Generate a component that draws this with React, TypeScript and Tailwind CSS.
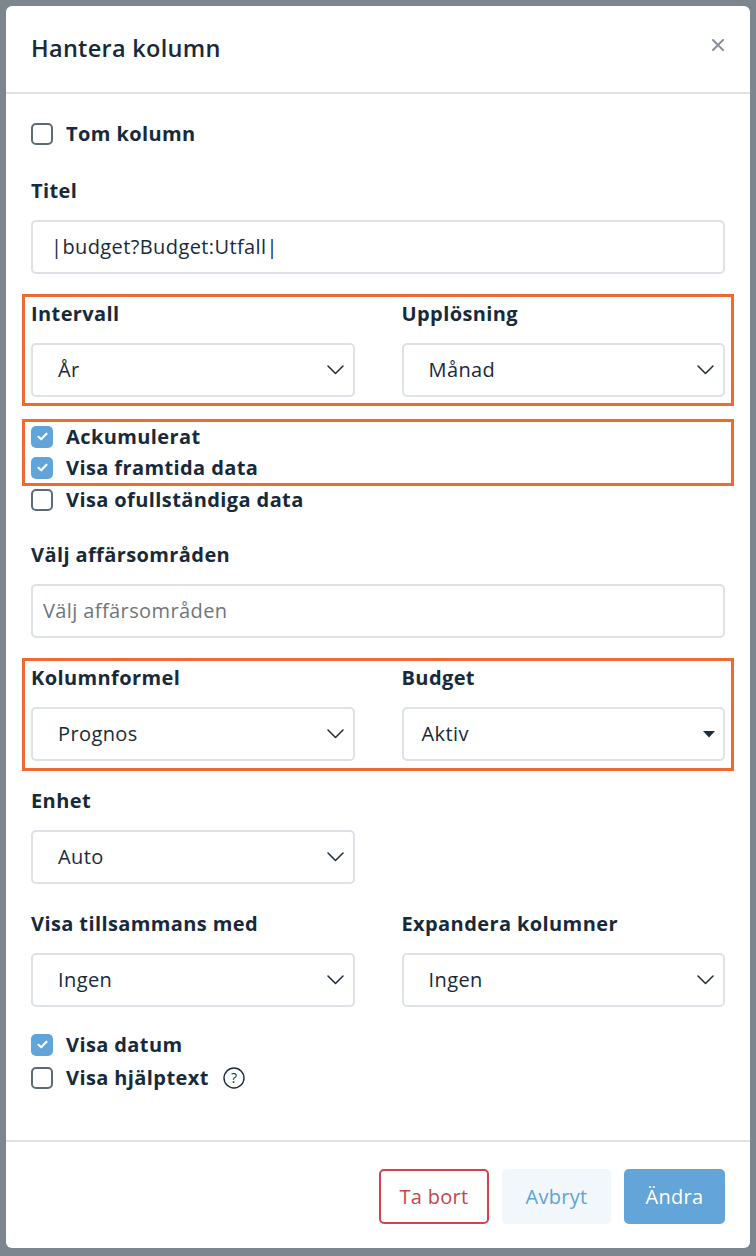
import React from 'react';

const font = { fontFamily: "'Open Sans', Lato, sans-serif" };

const Check: React.FC<{ checked?: boolean; label: string; children?: React.ReactNode }> = ({ checked, label, children }) => (
  <div className="flex items-center h-[31px]">
    {checked ? (
      <span className="w-[22px] h-[22px] rounded-[5px] bg-[#61a4da] flex items-center justify-center">
        <svg width="11" height="9" viewBox="0 0 11 9" fill="none">
          <path d="M1.5 4.8L4.2 7.3L9.5 1.7" stroke="white" strokeWidth="2.2" strokeLinecap="round" strokeLinejoin="round" />
        </svg>
      </span>
    ) : (
      <span className="w-[22px] h-[22px] rounded-[5px] border-2 border-[#5c6977] bg-white" />
    )}
    <span className="ml-[13px] text-[20px] tracking-[0.4px] font-bold text-[#172a3b]">{label}</span>
    {children}
  </div>
);

const Chevron = () => (
  <svg width="17" height="10" viewBox="0 0 17 10" fill="none">
    <path d="M1 1L8.5 8.5L16 1" stroke="#1d2b3a" strokeWidth="1.5" strokeLinecap="round" strokeLinejoin="round" />
  </svg>
);

const Select: React.FC<{ value: string; caret?: boolean }> = ({ value, caret }) => (
  <div
    className={`h-[54px] rounded-[5px] border-2 border-[#dce2e7] bg-white flex items-center justify-between ${
      caret ? 'pl-[18px] pr-[8px]' : 'pl-[25px] pr-[9px]'
    }`}
  >
    <span className="text-[20px] tracking-[0.4px] text-[#172a3b]">{value}</span>
    {caret ? (
      <svg width="12" height="7" viewBox="0 0 12 7">
        <path d="M0 0H12L6 6.5Z" fill="#1d2b3a" />
      </svg>
    ) : (
      <Chevron />
    )}
  </div>
);

const Label: React.FC<{ children: React.ReactNode }> = ({ children }) => (
  <div className="h-[24px] flex items-center text-[20px] tracking-[0.4px] font-bold text-[#172a3b]">{children}</div>
);

const Field: React.FC<{ label: string; value: string; caret?: boolean }> = ({ label, value, caret }) => (
  <div className="flex flex-col">
    <Label>{label}</Label>
    <div className="mt-[17px]">
      <Select value={value} caret={caret} />
    </div>
  </div>
);

const Highlight: React.FC<{ children: React.ReactNode; className?: string }> = ({ children, className }) => (
  <div className={`-mx-[9px] border-[3px] border-[#ef6a2f] px-[6px] ${className ?? ''}`}>{children}</div>
);

const App: React.FC = () => {
  return (
    <div className="min-h-screen bg-[#7c868e] p-[6px]" style={font}>
      <div className="bg-white rounded-[6px] h-[1242px] w-[744px] flex flex-col overflow-hidden">
        {/* header */}
        <div className="h-[88px] border-b-2 border-[#dee2e6] flex items-center justify-between pl-[25px] pr-[25px] shrink-0">
          <h1 className="text-[23.5px] tracking-[0.3px] font-semibold text-[#172a3b]">Hantera kolumn</h1>
          <svg width="12" height="12" viewBox="0 0 12 12" className="-mt-[8px] mr-[1px]">
            <path d="M1 1L11 11M11 1L1 11" stroke="#8a9199" strokeWidth="2" strokeLinecap="round" />
          </svg>
        </div>

        {/* body */}
        <div className="flex-1 px-[25px] pt-[24px]">
          <Check label="Tom kolumn" />

          <div className="mt-[30px]">
            <Label>Titel</Label>
            <div className="mt-[17px] h-[54px] rounded-[5px] border-2 border-[#dce2e7] flex items-center pl-[18px] text-[20px] tracking-[0.4px] text-[#172a3b]">
              |budget?Budget:Utfall|
            </div>
          </div>

          <Highlight className="mt-[20px] pt-[5px] pb-[6px]">
            <div className="grid grid-cols-2 gap-x-[47px]">
              <Field label="Intervall" value="År" />
              <Field label="Upplösning" value="Månad" />
            </div>
          </Highlight>

          <Highlight className="mt-[13px]">
            <div className="flex flex-col">
              <div className="-mt-[1px]">
                <Check checked label="Ackumulerat" />
              </div>
              <Check checked label="Visa framtida data" />
            </div>
          </Highlight>
          <div className="-mt-[2px]">
            <Check label="Visa ofullständiga data" />
          </div>

          <div className="mt-[28px]">
            <Label>Välj affärsområden</Label>
            <div className="mt-[17px] h-[54px] rounded-[5px] border-2 border-[#dce2e7] flex items-center pl-[10px] text-[20px] tracking-[0.4px] text-[#6f757b]">
              Välj affärsområden
            </div>
          </div>

          <Highlight className="mt-[20px] pt-[5px] pb-[7px]">
            <div className="grid grid-cols-2 gap-x-[47px]">
              <Field label="Kolumnformel" value="Prognos" />
              <Field label="Budget" value="Aktiv" caret />
            </div>
          </Highlight>

          <div className="mt-[18px] grid grid-cols-2 gap-x-[47px]">
            <Field label="Enhet" value="Auto" />
          </div>

          <div className="mt-[28px] grid grid-cols-2 gap-x-[47px]">
            <Field label="Visa tillsammans med" value="Ingen" />
            <Field label="Expandera kolumner" value="Ingen" />
          </div>

          <div className="mt-[22px] flex flex-col gap-[2px]">
            <Check checked label="Visa datum" />
            <Check label="Visa hjälptext">
              <svg width="22" height="22" viewBox="0 0 22 22" className="ml-[14px]" fill="none">
                <circle cx="11" cy="11" r="10" stroke="#1d2b3a" strokeWidth="1.4" />
                <text x="11" y="16" textAnchor="middle" fontSize="14" fontFamily="'Open Sans', sans-serif" fill="#1d2b3a">?</text>
              </svg>
            </Check>
          </div>
        </div>

        {/* footer */}
        <div className="shrink-0 border-t-2 border-[#dee2e6] pt-[27px] pb-[24px] pr-[25px] flex justify-end gap-[13px]">
          <button className="h-[55px] w-[110px] rounded-[5px] border-2 border-[#d0444c] bg-white text-[20px] tracking-[0.3px] text-[#c9454d]">
            Ta bort
          </button>
          <button className="h-[55px] w-[109px] rounded-[5px] bg-[#f2f7fc] text-[20px] tracking-[0.3px] text-[#60a2d8]">Avbryt</button>
          <button className="h-[55px] w-[101px] rounded-[5px] bg-[#63a4d9] text-[20px] tracking-[0.3px] text-white">Ändra</button>
        </div>
      </div>
    </div>
  );
};

export default App;
